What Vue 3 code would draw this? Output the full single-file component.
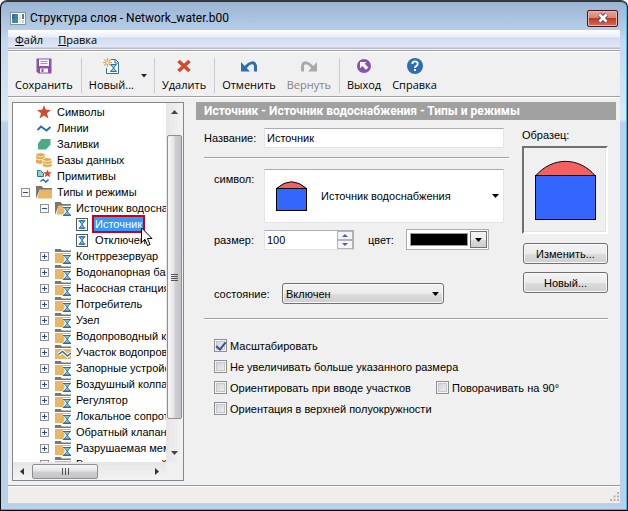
<script setup>
import { ref } from 'vue'

const tree = [
  { text: 'Символы', level: 0, icon: 'star' },
  { text: 'Линии', level: 0, icon: 'line' },
  { text: 'Заливки', level: 0, icon: 'fill' },
  { text: 'Базы данных', level: 0, icon: 'db' },
  { text: 'Примитивы', level: 0, icon: 'shapes' },
  { text: 'Типы и режимы', level: 0, icon: 'open', toggle: 'minus' },
  { text: 'Источник водоснабжения', level: 1, icon: 'open-type', toggle: 'minus' },
  { text: 'Источник', level: 2, icon: 'mode', selected: true },
  { text: 'Отключен', level: 2, icon: 'mode' },
  { text: 'Контррезервуар', level: 1, icon: 'type', toggle: 'plus' },
  { text: 'Водонапорная башня', level: 1, icon: 'type', toggle: 'plus' },
  { text: 'Насосная станция', level: 1, icon: 'type', toggle: 'plus' },
  { text: 'Потребитель', level: 1, icon: 'type', toggle: 'plus' },
  { text: 'Узел', level: 1, icon: 'type', toggle: 'plus' },
  { text: 'Водопроводный колодец', level: 1, icon: 'type', toggle: 'plus' },
  { text: 'Участок водопровода', level: 1, icon: 'line-type', toggle: 'plus' },
  { text: 'Запорные устройства', level: 1, icon: 'type', toggle: 'plus' },
  { text: 'Воздушный колпак', level: 1, icon: 'type', toggle: 'plus' },
  { text: 'Регулятор', level: 1, icon: 'type', toggle: 'plus' },
  { text: 'Локальное сопротивление', level: 1, icon: 'type', toggle: 'plus' },
  { text: 'Обратный клапан', level: 1, icon: 'type', toggle: 'plus' },
  { text: 'Разрушаемая мембрана', level: 1, icon: 'type', toggle: 'plus' },
  { text: 'Вспомогательный узел', level: 1, icon: 'type', toggle: 'plus' },
]

const name = ref('Источник')
const size = ref(100)
const scale = ref(true)
const limit = ref(false)
const orient = ref(false)
const upper = ref(false)
const rotate = ref(false)
</script>

<template>
  <div class="window">
    <header class="titlebar">
      <svg class="app-icon" width="16" height="13" viewBox="0 0 16 13">
        <rect x="0.5" y="0.5" width="15" height="12" fill="#fff" stroke="#8a939c" />
        <rect x="2" y="2" width="6" height="9" fill="#3f8f86" />
        <rect x="2" y="2" width="3" height="5" fill="#3a6fb0" />
        <rect x="9" y="2" width="2" height="9" fill="#dfe4ea" />
        <rect x="12" y="2" width="2" height="5" fill="#4a8a80" />
        <rect x="12" y="8" width="2" height="3" fill="#c9d2da" />
      </svg>
      <h1>Структура слоя - Network_water.b00</h1>
      <button class="close" aria-label="Закрыть">
        <svg width="12" height="10" viewBox="0 0 12 10">
          <path d="M2.500 1.500 9.500 8.500M9.500 1.500 2.500 8.500" stroke="#4b4656" stroke-width="4.400" />
          <path d="M2.500 1.500 9.500 8.500M9.500 1.500 2.500 8.500" stroke="#fff" stroke-width="2.600" />
        </svg>
      </button>
    </header>

    <div class="client">
      <nav class="menubar">
        <a href="#"><u>Ф</u>айл</a>
        <a href="#"><u>П</u>равка</a>
      </nav>

      <div class="toolbar">
        <div class="group">
          <button class="tool">
            <svg width="16" height="16" viewBox="0 0 16 16">
              <path d="M0.5 0.5h15v15h-13l-2-2z" fill="#8e4fb5" />
              <rect x="3" y="1.5" width="10" height="6.5" fill="#fff" />
              <path d="M4.5 3.5h7M4.5 5.5h7" stroke="#9b9b9b" />
              <rect x="4" y="10.5" width="8" height="4" fill="#fff" />
              <rect x="5.5" y="11" width="2" height="3" fill="#8e4fb5" />
            </svg>
            Сохранить
          </button>
        </div>
        <div class="group">
          <button class="tool">
            <svg width="16" height="16" viewBox="0 0 16 16">
              <path d="M8 1.500h4.500l3 3v11h-12V10" fill="#f4f9fc" stroke="#2d6fae" />
              <path d="M12 1.500v3.500h3.500" fill="none" stroke="#2d6fae" />
              <path d="M7.500 6.500h6L7.500 13.500h6z" fill="#8fd3bb" stroke="#2d6fae" />
              <path d="M4.500 0v9M0 4.500h9M1.300 1.300l6.400 6.400M7.700 1.300 1.300 7.700" stroke="#eba440" stroke-width="1.200" />
              <circle cx="4.500" cy="4.500" r="1.200" fill="#fff3dc" />
            </svg>
            Новый...
          </button>
          <button class="drop" aria-label="Варианты создания">
            <svg width="6" height="4" viewBox="0 0 6 4"><path d="M0 0h6L3 3.500z" fill="#222836" /></svg>
          </button>
        </div>
        <div class="group">
          <button class="tool">
            <svg width="16" height="16" viewBox="0 0 16 16">
              <path d="M2.500 3 13.500 13M13.500 3 2.500 13" stroke="#cf4a30" stroke-width="3.600" />
            </svg>
            Удалить
          </button>
        </div>
        <div class="group">
          <button class="tool">
            <svg width="16" height="16" viewBox="0 0 16 16">
              <path d="M14.500 13.500V8.500C14.500 3.500 9 3.500 4.500 9.500" fill="none" stroke="#2d6db0" stroke-width="3" />
              <path d="M0 4v9.500h9z" fill="#2d6db0" />
            </svg>
            Отменить
          </button>
          <button class="tool" disabled>
            <svg width="16" height="16" viewBox="0 0 16 16">
              <path d="M1.500 13.500V8.500C1.500 3.500 7 3.500 11.500 9.500" fill="none" stroke="#a9a9a9" stroke-width="3" />
              <path d="M16 4v9.500H7z" fill="#a9a9a9" />
            </svg>
            Вернуть
          </button>
        </div>
        <div class="group">
          <button class="tool">
            <svg width="16" height="16" viewBox="0 0 16 16">
              <circle cx="8" cy="8" r="7" fill="#8e4fb5" />
              <path d="M4 4h6.500L8.700 5.800 12.300 9.400 10 11.700 6.300 8 4 10.300z" fill="#fff" />
            </svg>
            Выход
          </button>
          <button class="tool">
            <svg width="16" height="16" viewBox="0 0 16 16">
              <circle cx="8" cy="8" r="8" fill="#2d6db0" />
              <path d="M5.300 6C5.300 2.600 10.700 2.600 10.700 5.800 10.700 8 8 7.800 8 10" fill="none" stroke="#fff" stroke-width="1.900" />
              <rect x="7" y="11" width="2" height="2" fill="#fff" />
            </svg>
            Справка
          </button>
        </div>
      </div>

      <main class="content">
        <section class="tree-box">
          <ul class="tree">
            <li v-for="node in tree" :key="node.text + node.level" :class="'level-' + node.level">
              <button v-if="node.toggle" class="toggle" :aria-label="node.text">
                <svg width="9" height="9" viewBox="0 0 9 9">
                  <rect x="0.500" y="0.500" width="8" height="8" fill="#f7f7f7" stroke="#919191" />
                  <path d="M2 4.500h5" stroke="#2b4a8b" />
                  <path v-if="node.toggle === 'plus'" d="M4.500 2v5" stroke="#2b4a8b" />
                </svg>
              </button>
              <span v-else class="toggle"></span>
              <svg class="node-icon" width="16" height="16" viewBox="0 0 16 16">
                <path v-if="node.icon === 'star'" d="M8 1 9.800 5.800 15 6 10.900 9.200 12.500 14.500 8 11.500 3.500 14.500 5.100 9.200 1 6 6.200 5.800z" fill="#cf4a30" />
                <path v-if="node.icon === 'line'" d="M1.500 10 5 6.500 10.500 10.500 14.500 7" fill="none" stroke="#2d6db0" stroke-width="2" />
                <path v-if="node.icon === 'fill'" d="M5.500 3H14.500V8.500L10 13.500H2V7.500z" fill="#4bab84" />
                <g v-if="node.icon === 'db'" fill="#e6a84a">
                  <path d="M0 3v7c0 2 7 2.500 9 1V3z" />
                  <ellipse cx="4.500" cy="2.800" rx="4.500" ry="2" stroke="#fff" stroke-width="0.700" />
                  <path d="M0 6.500c1.500 1.500 4 1.500 6 1" fill="none" stroke="#fff" />
                  <path d="M6.500 7.500v6c0 2.500 9.500 2.500 9.500 0v-6z" stroke="#fff" stroke-width="0.600" />
                  <ellipse cx="11.200" cy="7.500" rx="4.500" ry="2" stroke="#fff" stroke-width="0.900" />
                  <path d="M7 11c2 1.800 7 1.800 9 0" fill="none" stroke="#fff" stroke-width="0.800" />
                </g>
                <g v-if="node.icon === 'shapes'">
                  <path d="M1.500 2.500h3l3 3v3h-6z" fill="#8fd3bb" stroke="#2d6db0" />
                  <path d="M11.500 1.500l1.200 2.700 3.200.100-2.500 2 .900 3-2.800-1.800-2.800 1.800.900-3-2.500-2 3.200-.100z" fill="#cf4a30" />
                  <path d="M4.500 13.500 7 11.500 10 14 12.500 11.500" fill="none" stroke="#2d6db0" stroke-width="1.500" />
                </g>
                <g v-if="node.icon.startsWith('open')">
                  <path d="M0 2h5.500l2 2H16v2H3.500L0 15z" fill="#777" />
                  <path d="M3.500 5.500H16V14.500H1.500z" fill="#e9b663" />
                </g>
                <g v-if="node.icon === 'type' || node.icon === 'line-type'">
                  <path d="M0 1h5.500l1.500 1.500H16V4H0z" fill="#777" />
                  <rect y="5" width="16" height="10" fill="#e9b663" />
                </g>
                <g v-if="node.icon === 'type' || node.icon === 'open-type'">
                  <path d="M7.500 6H16v10H7.500l2.500-5z" fill="#fff" />
                  <path d="M9.200 7.500h6L9.200 15h6z" fill="#8fd3bb" stroke="#2d6db0" />
                  <path d="M8 7.500h8M8 15.300h8" stroke="#2d6db0" stroke-width="1.200" />
                </g>
                <g v-if="node.icon === 'line-type'" fill="none">
                  <path d="M3.500 10.500 7.500 7.500 12.500 12 16 9" stroke="#fff" stroke-width="3.500" />
                  <path d="M3.500 10.500 7.500 7.500 12.500 12 16 9" stroke="#2d6db0" stroke-width="1.500" />
                </g>
                <g v-if="node.icon === 'mode'">
                  <rect x="2.500" y="2.500" width="11" height="12" fill="#fff" stroke="#4d5966" />
                  <path d="M5.500 5h5L5.500 12h5z" fill="#8fd3bb" stroke="#2d6db0" />
                  <path d="M4.500 4.700h7M4.500 12.300h7" stroke="#2d6db0" />
                </g>
              </svg>
              <span class="node-text" :class="{ selected: node.selected }">{{ node.text }}</span>
              <svg v-if="node.selected" class="pointer" width="12" height="20" viewBox="0 0 12 20">
                <path d="M0.500 0.800V15.500L4 12.300 6.500 18.500 9 17.500 6.500 11.500H11z" fill="#fff" stroke="#000" />
              </svg>
            </li>
          </ul>
          <div class="vscroll">
            <svg class="arrow" width="7" height="4" viewBox="0 0 7 4"><path d="M0 4 3.500 0 7 4z" fill="#444" /></svg>
            <div class="thumb"><i></i><i></i><i></i><i></i></div>
            <svg class="arrow" width="7" height="4" viewBox="0 0 7 4"><path d="M0 0 3.500 4 7 0z" fill="#444" /></svg>
          </div>
          <div class="hscroll">
            <svg class="arrow" width="4" height="7" viewBox="0 0 4 7"><path d="M4 0 0 3.500 4 7z" fill="#333" /></svg>
            <div class="track"><div class="thumb"><i></i><i></i><i></i></div></div>
            <svg class="arrow" width="4" height="7" viewBox="0 0 4 7"><path d="M0 0 4 3.500 0 7z" fill="#333" /></svg>
          </div>
        </section>

        <section class="panel">
          <h2>Источник - Источник водоснабжения - Типы и режимы</h2>
          <div class="columns">
            <div class="fields">
              <div class="row name-row">
                <label for="name">Название:</label>
                <input id="name" v-model="name" class="text" type="text" />
              </div>
              <hr />
              <div class="row symbol-row">
                <label for="symbol">символ:</label>
                <div class="symbol">
                  <svg width="31" height="31" viewBox="0 0 31 31">
                    <path d="M0.500 7.500Q15.500 -6 30.500 7.500z" fill="#f46060" stroke="#000" />
                    <rect x="0.500" y="7.500" width="30" height="22" fill="#3366ff" stroke="#000" />
                  </svg>
                  <select id="symbol"><option>Источник водоснабжения</option></select>
                  <svg class="caret" width="7" height="4" viewBox="0 0 7 4"><path d="M0 0h7L3.500 4z" /></svg>
                </div>
              </div>
              <div class="row">
                <label for="size">размер:</label>
                <div class="spin">
                  <input id="size" v-model="size" type="text" inputmode="numeric" />
                  <div class="steps">
                    <button aria-label="Больше" @click="size++"><svg width="6" height="3" viewBox="0 0 6 3"><path d="M0 3 3 0 6 3z" fill="#4b62a8" /></svg></button>
                    <button aria-label="Меньше" @click="size--"><svg width="6" height="3" viewBox="0 0 6 3"><path d="M0 0 3 3 6 0z" fill="#4b62a8" /></svg></button>
                  </div>
                </div>
                <label class="color-label" for="color">цвет:</label>
                <div class="color">
                  <span class="swatch"></span>
                  <div class="color-drop">
                    <select id="color"><option>Чёрный</option></select>
                    <svg class="caret" width="7" height="4" viewBox="0 0 7 4"><path d="M0 0h7L3.500 4z" /></svg>
                  </div>
                </div>
              </div>
              <div class="row state-row">
                <label for="state">состояние:</label>
                <div class="state">
                  <select id="state"><option>Включен</option><option>Отключен</option></select>
                  <svg class="caret" width="7" height="4" viewBox="0 0 7 4"><path d="M0 0h7L3.500 4z" /></svg>
                </div>
              </div>
            </div>
            <aside class="preview">
              <span>Образец:</span>
              <div class="sample">
                <svg width="61" height="61" viewBox="0 0 61 61">
                  <path d="M0.500 16C17 -3.500 44 -3.500 60.500 16z" fill="#f46060" stroke="#000" />
                  <rect x="0.500" y="15.500" width="60" height="44" fill="#3366ff" stroke="#000" />
                </svg>
              </div>
              <button class="push">Изменить...</button>
              <button class="push">Новый...</button>
            </aside>
          </div>
          <hr class="wide" />
          <div class="checks">
            <label class="full"><input v-model="scale" type="checkbox" />Масштабировать</label>
            <label class="full"><input v-model="limit" type="checkbox" />Не увеличивать больше указанного размера</label>
            <label><input v-model="orient" type="checkbox" />Ориентировать при вводе участков</label>
            <label><input v-model="rotate" type="checkbox" />Поворачивать на 90°</label>
            <label class="full"><input v-model="upper" type="checkbox" />Ориентация в верхней полуокружности</label>
          </div>
        </section>
      </main>

      <footer class="status">
        <svg width="9" height="9" viewBox="0 0 9 9" fill="#b5b2b0">
          <path d="M7 0h2v2H7zM3.500 3.500h2v2h-2zM7 3.500h2v2H7zM0 7h2v2H0zM3.500 7h2v2h-2zM7 7h2v2H7z" />
        </svg>
      </footer>
    </div>
  </div>
</template>

<style>
body {
  background: #fff;
}
</style>

<style scoped>
.window,
.window * {
  box-sizing: border-box;
}
.window {
  display: flex;
  flex-direction: column;
  height: 100vh;
  overflow: hidden;
  padding: 1px 7px 7px;
  border: 1px solid #0b0d10;
  border-top-color: #3a3c42;
  border-radius: 7px 7px 0 0;
  background: linear-gradient(#99b4d1 0, #b5cde8 29px, #c4d9f0 40px, #dbe8f6 118px, #b9d1ea 122px);
  box-shadow: inset -1px -1px #22c3ee, inset 0 1px #2e3036;
  font-family: "Liberation Sans", sans-serif;
  font-size: 11px;
  line-height: 14px;
  color: #000;
}
button,
input,
select {
  margin: 0;
  padding: 0;
  border: 0;
  border-radius: 0;
  background: none;
  font: inherit;
  color: inherit;
}
select {
  appearance: none;
}
svg {
  display: block;
  flex: none;
}
.caret {
  pointer-events: none;
}

.titlebar {
  display: flex;
  flex: none;
  align-items: center;
  gap: 4px;
  height: 28px;
  padding: 4px 2px 0;
}
h1 {
  flex: 1;
  margin: 0;
  font: 12px/16px Roboto, "Open Sans", sans-serif;
}
.close {
  display: flex;
  align-items: center;
  justify-content: center;
  width: 31px;
  height: 17px;
  border: 1px solid #431726;
  border-radius: 2px;
  background: linear-gradient(#e6a497 0, #d98473 46%, #b93c24 50%, #cf7059 100%);
  box-shadow: inset 0 0 0 1px #eab5aa;
}

.client {
  display: flex;
  flex: 1;
  flex-direction: column;
  min-height: 0;
  background: #f0f0f0;
}
.menubar {
  display: flex;
  flex: none;
  gap: 15px;
  height: 20px;
  padding: 2px 7px;
  border-bottom: 1px solid #f4f5fa;
  background: linear-gradient(#fff 0, #e9eef8 7px, #d4dbed 8px, #e1e7f6 17px, #b6bccc 18px);
  font: 11px/16px "Open Sans", sans-serif;
}
.menubar a {
  color: #000;
  text-decoration: none;
}
.toolbar {
  display: flex;
  flex: none;
  align-items: center;
  height: 48px;
  padding-top: 3px;
  border-top: 1px solid #a0a0a0;
  border-bottom: 1px solid #fff;
  box-shadow: inset 0 1px #fff, inset 0 -1px #a0a0a0;
}
.group {
  display: flex;
  align-items: center;
  gap: 1px;
  height: 35px;
  padding: 0 3px 0 2px;
  border-right: 1px solid #c9cbd0;
}
.group:last-child {
  border-right: 0;
}
.tool {
  display: flex;
  flex-direction: column;
  align-items: center;
  gap: 3px;
  padding: 0 5px;
  font: 11px/16px "Open Sans", sans-serif;
}
.tool:disabled {
  color: #838383;
}
.drop {
  padding: 0 4px 0 1px;
}

.content {
  display: grid;
  flex: 1;
  grid-template-columns: 172px minmax(0, 1fr);
  gap: 12px;
  min-height: 0;
  padding: 4px;
}
.tree-box {
  display: grid;
  grid-template-rows: minmax(0, 1fr) 18px;
  grid-template-columns: minmax(0, 1fr) 17px;
  min-height: 0;
  border: 1px solid #828790;
  background: #f0f0f0;
}
.tree {
  min-height: 0;
  margin: 0;
  padding: 1px 0 0;
  overflow: hidden;
  background: #fff;
  list-style: none;
}
.tree li {
  position: relative;
  display: flex;
  align-items: center;
  height: 16px;
  padding-left: 8px;
  white-space: nowrap;
}
.tree .level-1 {
  padding-left: 27px;
}
.tree .level-2 {
  padding-left: 46px;
}
.toggle {
  flex: none;
  width: 9px;
  margin-right: 6px;
}
.node-text {
  padding-left: 5px;
}
.node-text.selected {
  margin-left: 4px;
  padding: 0 1px;
  background: #3399ff;
  color: #fff;
  outline: 2px solid #cc0010;
}
.pointer {
  position: absolute;
  top: 11px;
  left: 128px;
  z-index: 1;
}
.vscroll {
  display: flex;
  flex-direction: column;
  align-items: center;
  padding: 7px 1px;
  background: linear-gradient(90deg, #e6e6e6, #f3f3f3);
}
.thumb {
  display: flex;
  align-items: center;
  justify-content: center;
  border: 1px solid #8f8f8f;
  border-radius: 2px;
}
.vscroll .thumb {
  flex: 1;
  flex-direction: column;
  gap: 1px;
  align-self: stretch;
  margin: 21px 0 32px;
  background: linear-gradient(90deg, #f6f6f6, #e4e4e6 48%, #cfcfd3 52%, #c4c4c9);
}
.vscroll i {
  width: 7px;
  height: 1px;
  background: #555;
}
.hscroll {
  display: flex;
  align-items: center;
  padding: 0 7px;
  background: linear-gradient(#e6e6e6, #f3f3f3);
}
.hscroll .track {
  flex: 1;
  padding: 0 57px 0 8px;
}
.hscroll .thumb {
  gap: 2px;
  height: 15px;
  background: linear-gradient(#f6f6f6, #e4e4e6 48%, #cfcfd3 52%, #c4c4c9);
}
.hscroll i {
  width: 1px;
  height: 7px;
  background: #555;
}

.panel {
  min-width: 0;
}
h2 {
  margin: 0;
  padding: 0 8px;
  background: #a0a0a0;
  color: #fff;
  font: bold 12px/18px Roboto, "Liberation Sans", sans-serif;
}
.columns {
  display: grid;
  grid-template-columns: minmax(0, 1fr) 86px;
  gap: 13px;
  padding: 8px 8px 0;
}
hr {
  height: 2px;
  margin: 9px 0 10px;
  border: 0;
  border-top: 1px solid #a0a0a0;
  background: #fff;
}
.row {
  display: flex;
  align-items: center;
  padding: 0 5px 0 10px;
}
.row > label {
  flex: none;
  width: 50px;
}
.row.name-row {
  padding-left: 0;
}
.row.name-row > label {
  width: 60px;
}
.text {
  flex: 1;
  min-width: 0;
  height: 20px;
  padding: 0 2px;
  border: 1px solid #e2e3ea;
  border-top-color: #abadb3;
  background: #fff;
}
.row.symbol-row {
  align-items: flex-start;
  margin-bottom: 6px;
}
.symbol-row > label {
  padding-top: 3px;
}
.symbol {
  display: flex;
  flex: 1;
  align-items: center;
  gap: 14px;
  height: 54px;
  padding: 0 4px 0 11px;
  border: 1px solid #e2e3ea;
  border-top-color: #abadb3;
  background: #fff;
}
.symbol select {
  flex: 1;
  min-width: 0;
}
.spin {
  display: flex;
  width: 90px;
  height: 20px;
  border: 1px solid #abadb3;
  border-bottom-color: #e2e3ea;
  border-left-color: #e2e3ea;
  background: #fff;
}
.spin input {
  flex: 1;
  min-width: 0;
  padding: 0 2px;
}
.steps {
  display: flex;
  flex-direction: column;
  width: 16px;
  background: #f0f0f0;
}
.steps button {
  display: flex;
  flex: 1;
  align-items: center;
  justify-content: center;
  border: 1px solid #b4b4b8;
  background: #f4f4f6;
}
.row > .color-label {
  width: 38px;
  margin-left: 14px;
}
.color {
  display: flex;
  gap: 2px;
  width: 83px;
  height: 21px;
  padding: 1px;
  border: 1px solid #abadb3;
  background: #fff;
}
.swatch {
  flex: 1;
  margin: 2px 0 2px 2px;
  border: 1px solid #9a9a9a;
  background: #000;
}
.color-drop {
  display: grid;
  align-items: center;
  justify-items: center;
  width: 17px;
  border: 1px solid #707070;
  background: linear-gradient(#f4f4f4, #ebebeb 50%, #dadada 52%, #cfcfcf);
}
.color-drop > *,
.state > * {
  grid-area: 1 / 1;
}
.color-drop select {
  width: 100%;
  height: 100%;
  color: transparent;
}
.state-row {
  margin-top: 33px;
}
.row.state-row > label {
  width: 68px;
}
.state {
  display: grid;
  align-items: center;
  justify-items: end;
  width: 162px;
  height: 21px;
  padding: 0 4px 0 3px;
}
.state,
.push {
  border: 1px solid #707070;
  border-radius: 3px;
  background: linear-gradient(#f3f3f3, #ebebeb 50%, #dcdcdc 52%, #cfcfcf);
  box-shadow: inset 0 0 0 1px #f8f8f8;
}
.state select {
  width: 100%;
  height: 100%;
}
.preview {
  display: flex;
  flex-direction: column;
}
.sample {
  display: flex;
  align-items: center;
  justify-content: center;
  height: 88px;
  margin: 4px 0 9px;
  border: 2px solid #fff;
  border-top-color: #707070;
  border-left-color: #707070;
  box-shadow: inset -1px -1px #e3e3e3;
}
.push {
  height: 21px;
  margin: 0 0 8px 1px;
}
hr.wide {
  margin: 14px 8px 19px;
}
.checks {
  display: grid;
  grid-template-columns: 222px minmax(0, 1fr);
  gap: 8px 0;
  padding-left: 18px;
}
.checks label {
  display: flex;
  align-items: center;
  gap: 3px;
  height: 13px;
}
.checks .full {
  grid-column: 1 / -1;
}
.checks input {
  display: grid;
  flex: none;
  place-items: center;
  width: 13px;
  height: 13px;
  appearance: none;
  border: 1px solid #8e8f8f;
  background: linear-gradient(135deg, #c9ced5, #f3f4f5);
  box-shadow: inset 0 0 0 1px #f4f4f4, inset 0 0 0 2px #c4c8ce;
}
.checks input:checked::before {
  content: "";
  width: 4px;
  height: 8px;
  margin-bottom: 2px;
  border: solid #3d4f91;
  border-width: 0 2px 2px 0;
  transform: rotate(40deg);
}
.status {
  display: flex;
  flex: none;
  align-items: flex-end;
  justify-content: flex-end;
  height: 18px;
  padding: 0 1px 2px;
  border-top: 1px solid #97978f;
  background: #f1edeb;
  box-shadow: inset 0 1px #fff;
}
</style>
